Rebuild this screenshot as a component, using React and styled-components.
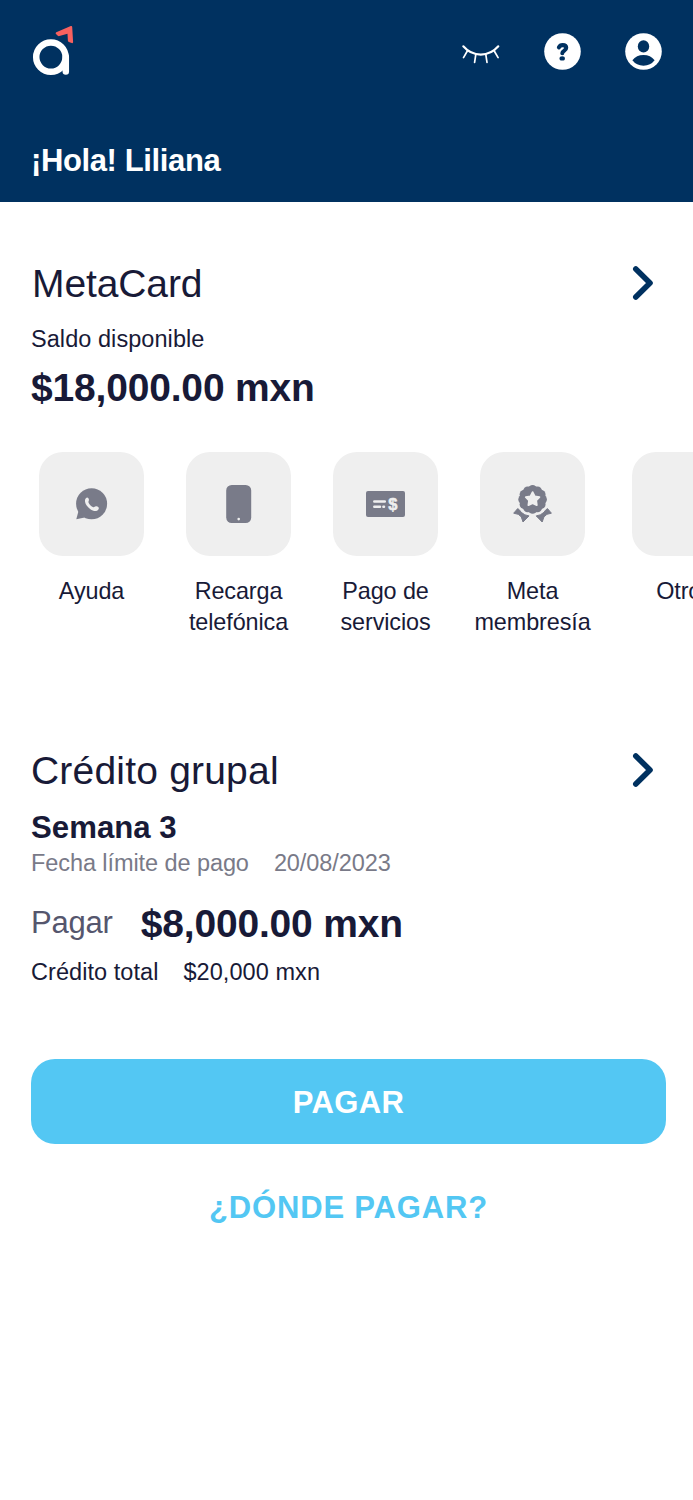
import React from "react";
import styled, { createGlobalStyle } from "styled-components";

const GlobalStyle = createGlobalStyle`
  * {
    box-sizing: border-box;
  }
  body {
    margin: 0;
    background-color: white;
    color: #181a37;
    font-family: "Liberation Sans", Arial, sans-serif;
  }
`;

const Container = styled.div`
  width: 100%;
  min-height: 1500px;
  overflow: hidden;
`;
const Header = styled.header`
  height: 202px;
  padding: 26px 31px 0;
  background-color: #003160;
  color: white;
`;
const TopBar = styled.div`
  display: flex;
  justify-content: space-between;
  align-items: center;
  height: 50px;
`;
const Actions = styled.div`
  display: flex;
  align-items: center;
  gap: 44px;
`;
const IconButton = styled.button`
  display: flex;
  border: none;
  padding: 0;
  background: none;
  cursor: pointer;
`;
const Greeting = styled.h1`
  margin: 66px 0 0;
  font-size: 31px;
  line-height: 38px;
  letter-spacing: -0.38px;
`;
const Section = styled.section`
  padding: ${(props) => props.$top}px 27px 0 31px;
`;
const TitleRow = styled.div`
  display: flex;
  justify-content: space-between;
  align-items: center;
  padding: 0 12px 0 ${(props) => props.$indent || 0}px;

  svg {
    margin-bottom: 2px;
  }
`;
const Title = styled.h2`
  margin: 0;
  font-size: 39px;
  font-weight: 400;
  line-height: 48px;
  letter-spacing: ${(props) => props.$spacing || 0}px;
`;
const Text = styled.p`
  display: flex;
  gap: 25px;
  margin: ${(props) => props.$top}px 0 0;
  color: ${(props) => (props.$muted ? "#797a88" : "inherit")};
  font-size: 23.5px;
  line-height: 30px;
  letter-spacing: ${(props) => (props.$muted ? "-0.08px" : "0.06px")};
`;
const Amount = styled.div`
  font-size: 39px;
  font-weight: 700;
  line-height: 46px;
  letter-spacing: -0.18px;
`;
const Balance = styled(Amount)`
  margin-top: 11px;
`;
const Shortcuts = styled.div`
  display: flex;
  gap: 42px;
  margin: 41px -27px 0 8px;
`;
const Shortcut = styled.div`
  display: flex;
  flex: none;
  flex-direction: column;
  align-items: center;
  width: 105px;

  &:last-child {
    margin-left: 5px;
  }
`;
const Tile = styled.div`
  display: flex;
  justify-content: center;
  align-items: center;
  width: 105px;
  height: 104px;
  border-radius: 24px;
  background-color: #efefef;
`;
const Label = styled.span`
  height: 62px;
  margin-top: 20px;
  font-size: 23.4px;
  line-height: 31px;
  letter-spacing: -0.1px;
  text-align: center;
  white-space: pre;
`;
const Week = styled.h3`
  margin: 14px 0 0;
  font-size: 31.2px;
  line-height: 38px;
`;
const PayRow = styled.div`
  display: flex;
  align-items: center;
  gap: 28px;
  margin-top: 23px;
`;
const PayLabel = styled.span`
  color: #55566d;
  font-size: 31px;
  line-height: 44px;
  letter-spacing: -0.2px;
  padding-bottom: 2px;
`;
const Button = styled.button`
  display: block;
  width: 100%;
  height: 85px;
  margin-top: 72px;
  padding: 2px 0 0;
  border: none;
  border-radius: 24px;
  background-color: #53c7f3;
  color: white;
  font: 700 31px/38px "Liberation Sans", Arial, sans-serif;
  letter-spacing: 0.4px;
  cursor: pointer;
`;
const LinkButton = styled(Button)`
  height: 38px;
  margin-top: 45px;
  padding: 0;
  background: none;
  color: #53c7f3;
  letter-spacing: 0.85px;
`;

const Logo = () => (
  <svg width="43" height="50" viewBox="0 0 43 50">
    <g fill="none" stroke="white" strokeWidth="6.5" strokeLinecap="round">
      <circle cx="19.9" cy="31.1" r="14.7" />
      <path d="M34.8 31.1v14.4" />
    </g>
    <path
      d="M25.3 6.2 39.8.1q1.3-.4 1.4.9l.9 14.9q.1 1.6-1.4 1.2l-2.8-1.1q-.9-.4-1-1.3l-.4-6.9-8.1 2.3q-.9.3-1.6-.3l-1.8-1.7q-.8-1.2.3-1.9z"
      fill="#f8615f"
    />
  </svg>
);

const EyeClosed = () => (
  <svg width="38" height="26" viewBox="0 -7 38 26">
    <g fill="none" stroke="white" strokeLinecap="round">
      <path d="M1.3 1.3Q8.5 9.6 18.8 9.6T36.3 1.3" strokeWidth="2.1" />
      <path
        d="M5.2 6.2 1.5 12.6M13.8 9.3 12.6 17.4M23.8 9.3 25 17.4M32.4 6.2 36.1 12.6"
        strokeWidth="1.7"
      />
    </g>
  </svg>
);

const Help = () => (
  <svg width="37" height="37" viewBox="0 0 37 37">
    <circle cx="18.5" cy="18.5" r="18.3" fill="white" />
    <path
      d="M14.9 14.3Q16 12.1 18.6 12.1 22.2 12.1 22.2 14.8 22.2 16.6 20.2 17.7 18.3 18.8 18.3 20.3"
      fill="none"
      stroke="#003160"
      strokeWidth="4.1"
      strokeLinecap="round"
    />
    <ellipse cx="18.2" cy="25.4" rx="2.7" ry="2.2" fill="#003160" />
  </svg>
);

const Account = () => (
  <svg width="37" height="37" viewBox="0 0 37 37">
    <circle cx="18.5" cy="18.5" r="18.3" fill="white" />
    <ellipse cx="18.5" cy="13.4" rx="5.7" ry="6.2" fill="#003160" />
    <path
      d="M7.4 27.3Q11.4 22 18.5 22T29.6 27.3Q25.6 32.7 18.5 32.7T7.4 27.3z"
      fill="#003160"
    />
  </svg>
);

const Chevron = () => (
  <svg width="22" height="36" viewBox="0 0 22 36">
    <path
      d="M3.8 4 18 18 3.8 32"
      fill="none"
      stroke="#003160"
      strokeWidth="5.6"
      strokeLinecap="round"
      strokeLinejoin="round"
    />
  </svg>
);

const ChatPhone = () => (
  <svg width="32" height="32" viewBox="0 0 32 32">
    <circle cx="15.6" cy="15.8" r="15.5" fill="#797b89" />
    <path d="M2.4 23.5.3 31.3 8.6 29.5z" fill="#797b89" />
    <path
      d="M9.9 10.2C11.2 8.9 12.6 9.9 12.9 11.6 13.2 13.1 12 13.5 12.6 14.8 13.7 17 15.2 18.4 17.3 19.2 18.5 19.6 18.8 17.9 20.4 18.3 22.6 18.8 23.4 19.9 22.4 21.4 20.6 24 17 23 14.4 21.2 11.6 19.2 9.5 16.6 9.1 14 8.8 12.4 9 11.1 9.9 10.2z"
      fill="#efefef"
    />
  </svg>
);

const Phone = () => (
  <svg width="26" height="38" viewBox="0 0 26 38">
    <rect x=".2" width="25" height="38" rx="5.5" fill="#797b89" />
    <circle cx="12.7" cy="34.1" r="1.3" fill="#efefef" />
  </svg>
);

const Bill = () => (
  <svg width="39" height="26" viewBox="0 0 39 26">
    <rect width="39" height="26" rx="2" fill="#797b89" />
    <path
      d="M8.3 10.5H18.8M8.3 15.7H14M17.4 15.7H18"
      stroke="#efefef"
      strokeWidth="2.5"
      strokeLinecap="round"
    />
    <text
      x="26.8"
      y="18.6"
      fill="#efefef"
      stroke="#efefef"
      strokeWidth="0.5"
      fontSize="16.5"
      fontWeight="700"
      textAnchor="middle"
    >
      $
    </text>
  </svg>
);

// scalloped edge of the medal: twelve shallow lobes around the centre
const scallops = Array.from({ length: 12 }, (_, i) => {
  const a = (i * Math.PI) / 6 - Math.PI / 2;
  return [19.6 + 10 * Math.cos(a), 14.4 + 10 * Math.sin(a)];
});

const Medal = () => (
  <svg width="39" height="39" viewBox="0 0 39 39">
    <g fill="#797b89">
      {scallops.map(([x, y]) => (
        <circle key={`${x}-${y}`} cx={x} cy={y} r="4.3" />
      ))}
      <circle cx="19.6" cy="14.4" r="13.2" />
      <g stroke="#797b89" strokeWidth="1" strokeLinejoin="round">
        <path d="M4.7 23.6Q7 25 8.2 27.3 11.5 30.5 16 30.9L10 37 8.3 31.9Q6 28.6.7 28.2z" />
        <path d="M34.5 23.6Q32.2 25 31 27.3 27.7 30.5 23.2 30.9L29.2 37 30.9 31.9Q33.2 28.6 38.4 28.2z" />
      </g>
    </g>
    <path
      d="M19.6 7.1 21.8 11.3 26.4 12.1 23.2 15.5 23.8 20.1 19.6 18.1 15.4 20.1 16 15.5 12.8 12.1 17.4 11.3z"
      fill="#efefef"
      stroke="#efefef"
      strokeWidth="1.8"
      strokeLinejoin="round"
    />
  </svg>
);

const shortcuts = [
  { label: "Ayuda", icon: <ChatPhone /> },
  { label: "Recarga\ntelefónica", icon: <Phone /> },
  { label: "Pago de\nservicios", icon: <Bill /> },
  { label: "Meta\nmembresía", icon: <Medal /> },
  { label: "Otros", icon: null },
];

const App = () => {
  return (
    <Container>
      <GlobalStyle />
      <Header>
        <TopBar>
          <IconButton>
            <Logo />
          </IconButton>
          <Actions>
            <IconButton>
              <EyeClosed />
            </IconButton>
            <IconButton>
              <Help />
            </IconButton>
            <IconButton>
              <Account />
            </IconButton>
          </Actions>
        </TopBar>
        <Greeting>¡Hola! Liliana</Greeting>
      </Header>
      <Section $top={58}>
        <TitleRow $indent={1}>
          <Title $spacing={-0.1}>MetaCard</Title>
          <Chevron />
        </TitleRow>
        <Text $top={16}>Saldo disponible</Text>
        <Balance>$18,000.00 mxn</Balance>
        <Shortcuts>
          {shortcuts.map((item) => (
            <Shortcut key={item.label}>
              <Tile>{item.icon}</Tile>
              <Label>{item.label}</Label>
            </Shortcut>
          ))}
        </Shortcuts>
      </Section>
      <Section $top={109}>
        <TitleRow>
          <Title $spacing={0.2}>Crédito grupal</Title>
          <Chevron />
        </TitleRow>
        <Week>Semana 3</Week>
        <Text $top={1} $muted>
          <span>Fecha límite de pago</span>
          <span>20/08/2023</span>
        </Text>
        <PayRow>
          <PayLabel>Pagar</PayLabel>
          <Amount>$8,000.00 mxn</Amount>
        </PayRow>
        <Text $top={10}>
          <span>Crédito total</span>
          <span>$20,000 mxn</span>
        </Text>
        <Button>PAGAR</Button>
        <LinkButton>¿DÓNDE PAGAR?</LinkButton>
      </Section>
    </Container>
  );
};

export default App;
